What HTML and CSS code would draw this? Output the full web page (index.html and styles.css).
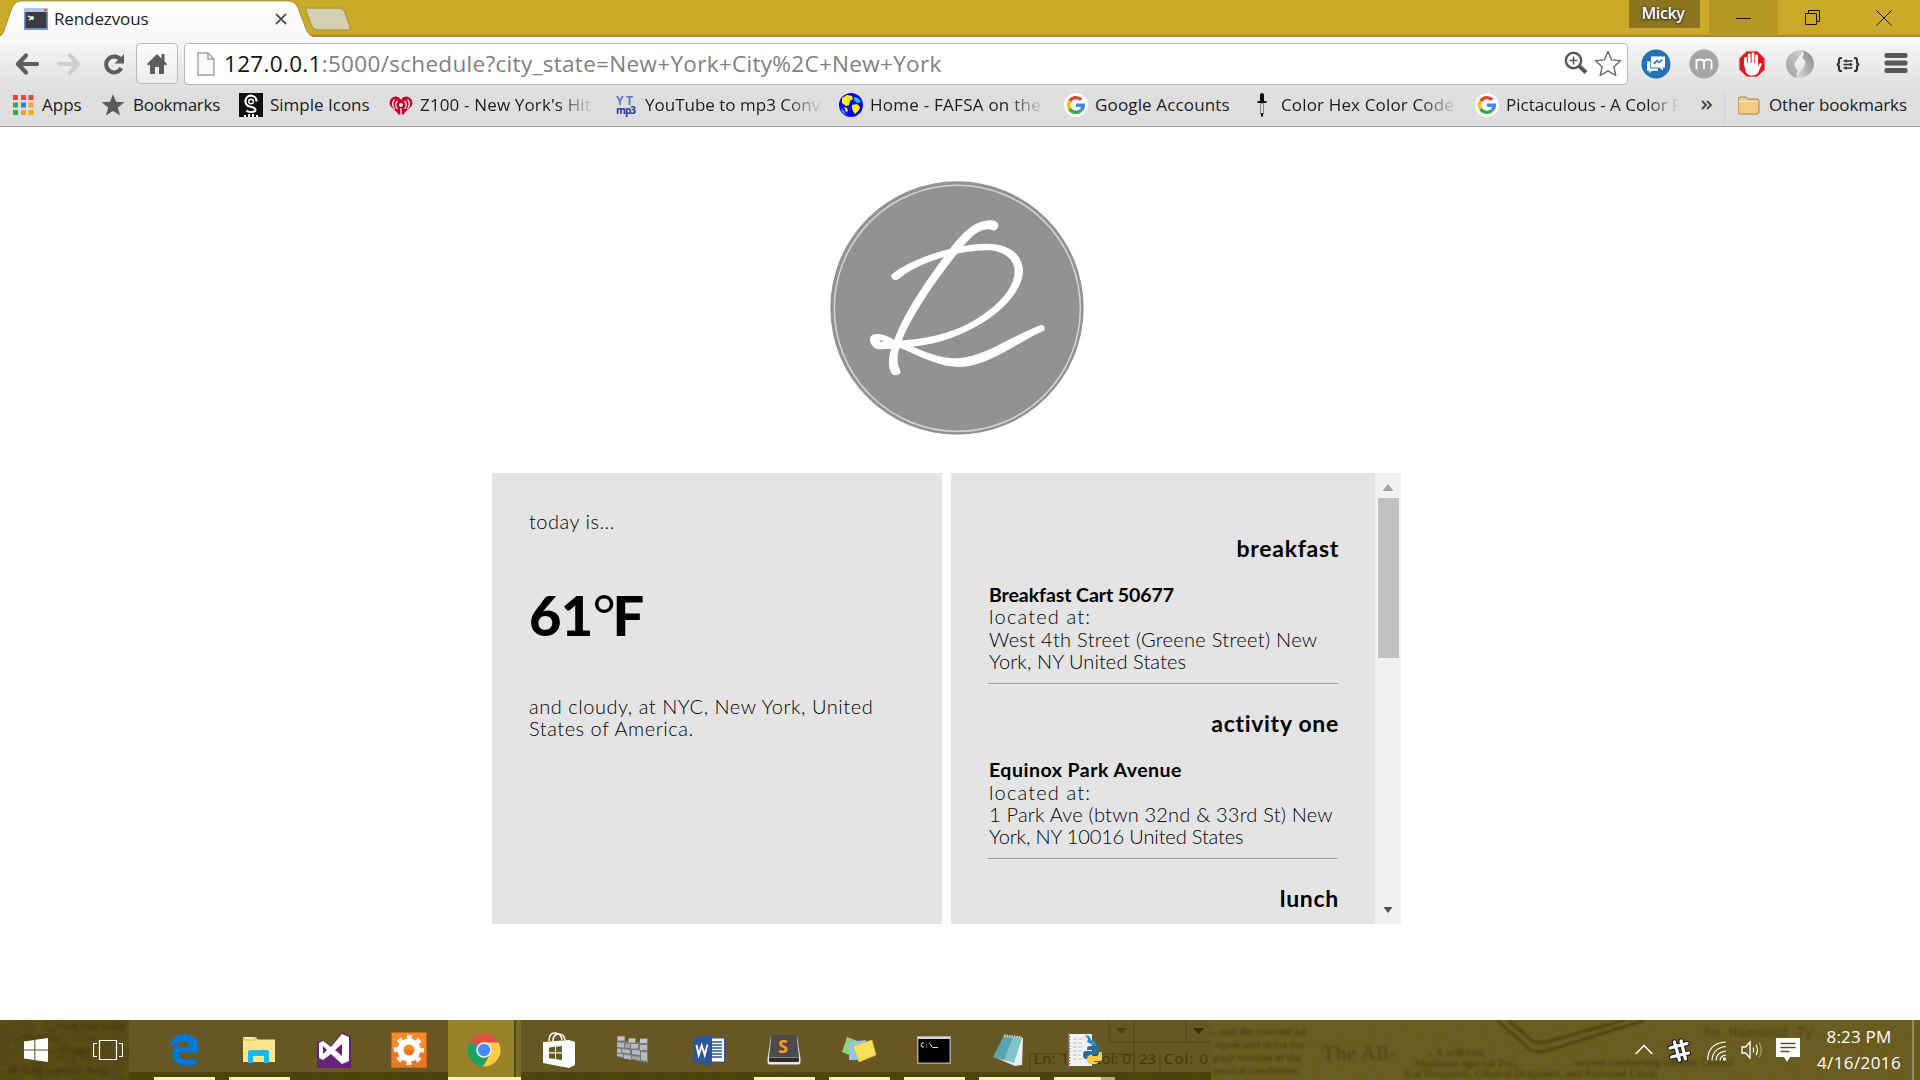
FILE: index.html
```html
<!DOCTYPE html>
<html lang="en">
<head>
<meta charset="utf-8">
<title>Rendezvous</title>
<link rel="stylesheet" href="styles.css">
</head>
<body>
<div class="screen">
  <header class="tabstrip">
    <div class="tab">
      <svg class="tab-shape" width="312" height="37" viewBox="0 0 312 37"><defs><linearGradient id="tg" x2="0" y2="1"><stop offset="0" stop-color="#fff"/><stop offset="1" stop-color="#f8f8f8"/></linearGradient></defs><path d="M0 36C4 35 4 30 6 25L12 8Q15 1 22 1H288Q295 1 298 8L306 29Q309 36 312 36V37H0Z" fill="url(#tg)"/><path d="M0 35C4 34 4 30 6 25L12 8Q15 1 22 1H288Q295 1 298 8L306 29Q309 36 312 36" fill="none" stroke="#8d7a2c" stroke-opacity=".7"/></svg>
      <svg class="favicon" width="24" height="22" viewBox="0 0 24 22"><rect width="24" height="22" fill="#6d96d8"/><rect width="24" height="4" fill="#a9c4ee"/><rect x="20" y="1" width="3" height="2" fill="#e8513a"/><rect x="1.500" y="4" width="21" height="16" fill="#3b3b3b"/><path d="M4 8l4 2-3 2M7 9h2v2H6" stroke="#eee" stroke-width="1.500" fill="none"/></svg>
      <span class="tab-title">Rendezvous</span>
      <svg class="tab-close" width="12" height="12" viewBox="0 0 12 12"><path d="M1 1l10 10M11 1L1 11" stroke="#555" stroke-width="1.800"/></svg>
    </div>
    <svg class="newtab" width="48" height="25" viewBox="0 0 48 25"><path d="M4 1H35Q39 1 41 5L46 20Q47 23 44 23H14Q10 23 8 20L2 4Q1 1 4 1Z" fill="#d3cfb3" stroke="#b39a3c" stroke-width="1.500"/></svg>
    <div class="user">Micky</div>
    <div class="win minimize"><svg width="16" height="16" viewBox="0 0 16 16"><path d="M0 8.500h15" stroke="#111"/></svg></div>
    <div class="win"><svg width="16" height="16" viewBox="0 0 16 16"><path d="M.5 3.500h11v11H.5zM3.500 3.500v-3h11v11h-3" stroke="#111" fill="none"/></svg></div>
    <div class="win"><svg width="16" height="16" viewBox="0 0 16 16"><path d="M.5.5l15 15M15.500.5l-15 15" stroke="#111"/></svg></div>
  </header>

  <div class="chrome">
    <nav class="toolbar">
      <svg class="back" width="24" height="22" viewBox="0 0 24 22"><path d="M22 11H4M11 2.500L3 11l8 8.500" stroke="#5d5d5d" stroke-width="4.200" fill="none" stroke-linecap="round" stroke-linejoin="round"/></svg>
      <svg class="forward" width="24" height="22" viewBox="0 0 24 22"><path d="M2 11H20M13 2.500L21 11l-8 8.500" stroke="#cfcfcf" stroke-width="4.200" fill="none" stroke-linecap="round" stroke-linejoin="round"/></svg>
      <svg class="reload" width="22" height="22" viewBox="0 0 22 22"><path d="M17.500 6.500A8 8 0 1 0 18.300 15" stroke="#5d5d5d" stroke-width="4" fill="none"/><path d="M21 1v9.500h-9.500z" fill="#5d5d5d"/></svg>
      <div class="home"><svg width="20" height="22" viewBox="0 0 20 22"><path d="M10 1L0 11l1.500 1.500L3 11.500V21h5v-7h4v7h5v-9.500l1.500 1L20 11l-2.500-2.500V1h-3v4.500z" fill="#5d5d5d"/></svg></div>
      <div class="omnibox">
        <svg class="doc" width="18" height="24" viewBox="0 0 18 24"><path d="M1 1h10l6 6v16H1z" fill="#fafafa" stroke="#a0a0a0" stroke-width="1.400"/><path d="M11 1v6h6" fill="none" stroke="#a0a0a0" stroke-width="1.400"/></svg>
        <div class="url"><span class="host">127.0.0.1</span>:5000/schedule?city_state=New+York+City%2C+New+York</div>
        <svg class="zoom" width="24" height="24" viewBox="0 0 24 24"><circle cx="9.500" cy="9.500" r="7.700" fill="none" stroke="#555" stroke-width="2.400"/><path d="M15 15l7 6.500" stroke="#555" stroke-width="4"/><path d="M5.500 9.500h8M9.500 5.500v8" stroke="#555" stroke-width="1.600"/></svg>
        <svg class="star" width="28" height="27" viewBox="0 0 28 27"><path d="M14 1.500l3.600 8.400 9 .8-6.800 6 2 8.800-7.800-4.700-7.800 4.700 2-8.800-6.800-6 9-.8z" fill="#fff" stroke="#6a6a6a" stroke-width="1.400" stroke-linejoin="round"/></svg>
      </div>
      <div class="exts">
        <svg width="30" height="30" viewBox="0 0 30 30"><circle cx="15" cy="15" r="14.500" fill="#2471b9"/><path d="M10 7.500h14v11h-2v3l-3.500-3H10z" fill="#fff"/><path d="M6 12.500h3.300v7h7.700v2.300h-6l-2.700 2.400v-2.400H6z" fill="#fff"/><path d="M13 15l3-3.500 2 2 3.500-3" stroke="#2471b9" stroke-width="1.600" fill="none"/></svg>
        <svg width="30" height="30" viewBox="0 0 30 30"><circle cx="15" cy="15" r="14.500" fill="#a5a5a5"/><path d="M7.500 20.500V10M7.500 14q0-3.500 3.800-3.500T15 14v6.500M15 14q0-3.500 3.800-3.500t3.700 3.500v6.500" stroke="#fff" stroke-width="1.900" fill="none"/></svg>
        <svg width="30" height="30" viewBox="0 0 30 30"><path d="M9.500 2h11L28 9.500v11L20.500 28h-11L2 20.500v-11z" fill="#e3171b" stroke="#e3dada"/><path d="M8.500 16V9.500M12.200 15V6M16 15V4.800M19.600 15V7" stroke="#fff" stroke-width="2.800" stroke-linecap="round"/><path d="M7.100 14h14v3.500l2-3.500q2-.5 1.500 1.500L21 24q-1.500 2.500-6 2.500-5 0-6.600-4.500Z" fill="#fff"/></svg>
        <svg width="30" height="30" viewBox="0 0 30 30"><defs><linearGradient id="jg" x1="0" y1="1" x2="1" y2="0"><stop offset="0" stop-color="#d8d8d8"/><stop offset="1" stop-color="#858585"/></linearGradient><linearGradient id="jh" x1="0" y1="1" x2="1" y2="0"><stop offset="0" stop-color="#9c9c9c"/><stop offset="1" stop-color="#d2d2d2"/></linearGradient></defs><path d="M18 1C9 .5 1 6 1 15c0 7 5 13 12 14-2-2-2-5 0-8-4-2-4-6-2-9 1.500-3 4-4 7-11Z" fill="url(#jh)"/><path d="M12 29C22 30 29 23 29 15 29 8 24 3 17 1c2 2 2 5 0 8 4 2 4 6 2 9-1.500 3-5 4-7 11Z" fill="url(#jg)"/></svg>
        <svg width="30" height="30" viewBox="0 0 30 30"><path d="M9 9H8q-2 0-2 2v2q0 2-2 2.500 2 .5 2 2.500v2q0 2 2 2h1M21 9h1q2 0 2 2v2q0 2 2 2.500-2 .5-2 2.500v2q0 2-2 2h-1" stroke="#333" stroke-width="2.200" fill="none"/><path d="M10.500 12h9M10.500 15.500h9M10.500 19h9" stroke="#333" stroke-width="1.700"/><path d="M13 10.500v3M17.500 14v3M13 17.500v3" stroke="#333" stroke-width="1.500"/></svg>
      </div>
      <svg class="menu" width="24" height="20" viewBox="0 0 24 20"><g fill="#585858"><rect x=".5" width="23" height="5" rx="2"/><rect x=".5" y="7.500" width="23" height="5" rx="2"/><rect x=".5" y="15" width="23" height="5" rx="2"/></g></svg>
    </nav>
    <nav class="bookmarks">
      <div class="bm"><svg class="bi" viewBox="0 0 24 24"><path d="M2 2h5v5H2zM10 2h5v5h-5zM17.500 2h5v5h-5z" fill="#f44336"/><path d="M2 9.500h5v5H2z" fill="#34a853"/><path d="M10 9.500h5v5h-5z" fill="#1e88e5"/><path d="M17.500 9.500h5v5h-5z" fill="#f9a825"/><path d="M2 17h5v5H2z" fill="#34a853"/><path d="M10 17h5v5h-5zM17.500 17h5v5h-5z" fill="#f9a60a"/></svg><span>Apps</span></div>
      <div class="bm tight"><svg class="bi" viewBox="0 0 24 24"><path d="M11 1l3 7.700 8.500.5-6.700 5.200 2.300 8L11 18l-7.100 4.400 2.300-8L-.5 9.200 8 8.700z" fill="#5a5a5a"/></svg><span>Bookmarks</span></div>
      <div class="bm"><svg class="bi" viewBox="0 0 24 24"><rect width="24" height="24" fill="#111"/><path d="M17.500 8.500a5.500 5.500 0 1 0-7 5q6 1 6 3.500 0 2-5 2-3 0-4-1.500" stroke="#fff" stroke-width="2.200" fill="none"/><circle cx="12" cy="8.500" r="2.300" fill="none" stroke="#fff" stroke-width="1.400"/><path d="M5 22h2v2H5zM9 21h2v3H9zM13 21h2v3h-2zM17 22h2v2h-2z" fill="#fff"/></svg><span>Simple Icons</span></div>
      <div class="bm wide"><svg class="bi" viewBox="0 0 24 24"><path d="M12 7C10 3 6.500 3 4.500 4 1 5.500-.5 9.500 1.500 13c2 3 6 5 8 8.500h5c2-3.500 6-5.500 8-8.500 2-3.500.5-7.500-3-9-2-1-5.500-1-7.500 3Z" fill="#c6002b"/><circle cx="12" cy="12" r="2" fill="#eee"/><path d="M8.500 8q-3.500 4 0 8M15.500 8q3.500 4 0 8M5.500 6.500q-4 5 .5 9.500M18.500 6.500q4 5-.5 9.500M12 15v7" stroke="#eee" stroke-width="1.300" fill="none"/></svg><span class="fade">Z100 - New York's Hit</span></div>
      <div class="bm"><svg class="bi" viewBox="0 0 24 24"><text x="2" y="12" class="yt1" textLength="17">YT</text><text x="2" y="21" class="yt2" textLength="20">mp3</text></svg><span class="fade">YouTube to mp3 Conv</span></div>
      <div class="bm wider"><svg class="bi" viewBox="0 0 24 24"><circle cx="12" cy="12" r="12" fill="#0808f0"/><path d="M3 5l5-3 5 1 1 3-3 2-1 4-3 1-4-3zM13 12l5-1 3 3-1 3-4 4-2-3-1-3zM5 14l3 1 1 3-2 1z" fill="#ffee12"/><path d="M15 4l4 1 3 4-4 1-3-3zM2 15l3 3 2 4-4-3z" fill="#35bed8"/></svg><span class="fade">Home - FAFSA on the</span></div>
      <div class="bm wide"><svg class="bi" viewBox="0 0 24 24"><circle cx="12" cy="12" r="12" fill="#fff"/><g fill="none" stroke-width="3.400"><path d="M5.700 8.200A7.300 7.300 0 0 1 17.200 6.800" stroke="#ea4335"/><path d="M5.700 15.800a7.300 7.300 0 0 1 0-7.600" stroke="#fbbc05"/><path d="M16.900 17.400A7.300 7.300 0 0 1 5.700 15.800" stroke="#34a853"/><path d="M12 12.300h7.300q0 3.500-2.400 5.100" stroke="#4285f4"/></g></svg><span>Google Accounts</span></div>
      <div class="bm wide"><svg class="bi" viewBox="0 0 24 24"><path d="M10 2q0-2 2-2t2 2v6h2.500v2H7.500V8H10z" fill="#111"/><path d="M10.500 10.500v9l1.500 3 1.500-3v-9z" fill="#ddd" stroke="#888"/><path d="M10.500 20h3l-1 4h-1z" fill="#111"/></svg><span class="fade">Color Hex Color Code</span></div>
      <div class="bm"><svg class="bi" viewBox="0 0 24 24"><circle cx="12" cy="12" r="12" fill="#fff"/><g fill="none" stroke-width="3.400"><path d="M5.700 8.200A7.300 7.300 0 0 1 17.200 6.800" stroke="#ea4335"/><path d="M5.700 15.800a7.300 7.300 0 0 1 0-7.600" stroke="#fbbc05"/><path d="M16.900 17.400A7.300 7.300 0 0 1 5.700 15.800" stroke="#34a853"/><path d="M12 12.300h7.300q0 3.500-2.400 5.100" stroke="#4285f4"/></g></svg><span class="fade long">Pictaculous - A Color P</span></div>
      <div class="more"><svg width="12" height="10" viewBox="0 0 12 10"><path d="M1 1l4 4-4 4M6 1l4 4-4 4" stroke="#4a4a4a" stroke-width="2" fill="none"/></svg></div>
      <div class="bm snug"><svg class="bi" viewBox="0 0 24 24"><path d="M0 6l1.500-2H8l1.500 2H19q2 0 2 2v11q0 2-2 2H2q-2 0-2-2z" fill="#f4cb86" stroke="#a98143"/><path d="M1 8.500h19" stroke="#fff0cb"/></svg><span>Other bookmarks</span></div>
    </nav>
  </div>

  <main class="page">
    <svg class="logo" width="254" height="256" viewBox="31 29 762 768">
      <circle cx="412" cy="413" r="380" fill="#929292"/>
      <circle cx="413" cy="414" r="369" fill="none" stroke="#d4d4d4" stroke-width="4.500"/>
      <g fill="#fff">
        <path d="M536 166C534 180 523 184 510 177C482 172 452 200 430 228C350 325 262 455 240 530C230 560 232 585 243 602C244 614 224 620 215 608C203 585 207 555 219 522C250 430 320 330 384 245C425 190 465 148 515 150C529 151 537 158 536 166Z"/>
        <path d="M217 312C265 270 400 221 500 220C570 220 609 252 610 303C606 405 430 522 262 530C230 535 200 536 178 537C158 535 148 515 152 500C160 485 195 489 225 510C300 512 390 490 450 458C535 410 583 355 585 305C586 265 550 240 500 240C410 240 290 280 240 324C228 335 208 325 217 312ZM178 512Q183 517 193 512Q184 508 178 512Z"/>
        <path d="M225 508C290 530 340 563 412 564C490 562 570 500 664 464C674 462 680 475 671 482C600 512 510 585 428 590C350 592 290 550 228 528Z"/>
      </g>
    </svg>
    <div class="cards">
      <section class="card weather">
        <p><span class="today">today is...</span></p>
        <h1>61<span class="degree">°</span>F</h1>
        <p class="summary">and cloudy, at NYC, New York, United<br>States of America.</p>
      </section>
      <section class="card plan">
        <div class="list">
          <h2>breakfast</h2>
          <p><b>Breakfast Cart 50677</b><br><span class="located">located at:</span><br><span class="street">West 4th Street (Greene Street) New</span><br><span class="city">York, NY United States</span></p>
          <hr>
          <h2>activity one</h2>
          <p><b class="gym">Equinox Park Avenue</b><br><span class="located">located at:</span><br><span class="avenue">1 Park Ave (btwn 32nd &amp; 33rd St) New</span><br><span class="zip">York, NY 10016 United States</span></p>
          <hr>
          <h2>lunch</h2>
        </div>
        <div class="scrollbar">
          <svg width="12" height="7" viewBox="0 0 12 7"><path d="M6 0l5.500 7H.5z" fill="#a3a3a3"/></svg>
          <div class="thumb"></div>
          <svg class="down" width="10" height="6" viewBox="0 0 10 6"><path d="M5 6L.5 0h9z" fill="#505050"/></svg>
        </div>
      </section>
    </div>
  </main>

  <footer class="taskbar">
    <svg class="wall" width="1920" height="60" viewBox="0 0 1920 60">
      <defs>
        <filter id="grain" x="0" y="0" width="100%" height="100%"><feTurbulence type="fractalNoise" baseFrequency=".09 .14" numOctaves="3" seed="4"/><feColorMatrix values="0 0 0 0 .15  0 0 0 0 .11  0 0 0 0 0  .9 0 0 0 -.32"/></filter>
        <filter id="soft"><feGaussianBlur stdDeviation=".9"/></filter>
      </defs>
      <rect width="1920" height="60" fill="#6a5c26"/>
      <rect width="1211" height="60" fill="#54471a"/>
      <rect width="1920" height="60" filter="url(#grain)"/>
      <g class="print" filter="url(#soft)">
        <text x="14" y="22">.. Mohen.</text><text x="64" y="10">sol Mei MDS</text><text x="60" y="34">Clotpe</text><text x="6" y="54">all dohg popular Surg</text>
        <text x="1213" y="15">, and the current ed</text><text x="1216" y="28">upon and drive for</text><text x="1213" y="41">page version of the</text><text x="1213" y="54">several conditions.</text>
        <text x="1322" y="40" class="big">The All-</text><text x="1430" y="36">. X will con.</text><text x="1415" y="47">Medicine Special Tre..</text><text x="1405" y="57">ical Diagnosis, Clinical Diagnosis, and Personal Clinic</text>
        <text x="1575" y="46">urrent conducting various Clinics</text><text x="1704" y="17" class="machine">he Hammond Ty</text>
        <path d="M1497 0L1525 25Q1533 35 1550 30L1645 0M1508 0L1530 19Q1537 25 1550 21L1625 0" fill="none" stroke="#3e3203" stroke-width="2" opacity=".75"/>
      </g>
      <rect x="129" width="1082" height="52" fill="#665724"/>
      <rect x="129" y="52" width="1082" height="8" fill="#4b3d0b" fill-opacity=".55"/>
      <g stroke="#54460f" fill="none"><path d="M1030 52V34h104v18M1160 34v18M1134 1v51M1109 22V1M1211 22h-102M1186 1v21"/></g>
      <path d="M1116 8h11l-5.500 6z" fill="#4e400c"/><path d="M1193 8h11l-5.500 6z" fill="#3a2d00"/>
      <g class="ghost"><text x="1034" y="44" textLength="35">Ln: 1</text><text x="1092" y="44" textLength="39">Col: 0</text><text x="1139" y="44">23</text><text x="1164" y="44" textLength="44">Col: 0</text></g>
    </svg>
    <div class="tasks">
      <div class="task start"><svg width="24" height="24" viewBox="0 0 24 24"><path d="M0 3.500L10.300 2v9.500H0zM11.300 1.800L24 0v11.500H11.300zM0 12.500h10.300V22L0 20.600zM11.300 12.500H24V24l-12.700-1.800z" fill="#fff"/></svg></div>
      <div class="task view"><svg width="30" height="20" viewBox="0 0 30 20"><path d="M6.500.5h17v19h-17zM4 3.500H.5v13H4M26 3.500h3.500v13H26" fill="none" stroke="#fff" stroke-width="1.200"/></svg></div>
      <div class="task run"><svg width="32" height="34" viewBox="0 0 32 34"><path d="M1 15C3 6 9 1 16 1c9 0 14.500 6 14.500 13v5.500h-20C11 24 15 27 20 27q5 0 8.500-2.300v6.600Q24 33 19 33C10 33 5 28 4.500 21.500 4 16 8 11 12 9.500q-1.500 2-1.600 5h11.400C21.800 11 20 8.500 15.500 8.500 9.500 8.500 4 11.500 1 15Z" fill="#0078d7"/></svg></div>
      <div class="task run"><svg width="34" height="30" viewBox="0 0 34 30"><path d="M1 2h13l2 3h16v22H1z" fill="#f6cf5b"/><path d="M1 6h12l2-1.500h18V27H1z" fill="#fde48f"/><path d="M3 3h8" stroke="#fff" stroke-width="1.500"/><path d="M6 28V17q0-2 2-2h17q2 0 2 2v11h-5v-7H11v7z" fill="#16b8ef"/></svg></div>
      <div class="task"><svg width="34" height="36" viewBox="0 0 34 36"><path d="M25 0l9 4v32H0V9h6l8 5z" fill="#68217a"/><path fill-rule="evenodd" d="M25 2l7 3v24l-7 3-11-10-8 6-4-2V11l4-2 8 6zM25 12l-7 6 7 6zM6 14v8l4-4z" fill="#fff"/></svg></div>
      <div class="task"><svg width="36" height="36" viewBox="0 0 36 36"><rect x=".5" y=".5" width="35" height="35" rx="1" fill="#f58a28" stroke="#c5601c"/><path d="M0 18h36v18H0z" fill="#e36c22" opacity=".55"/><circle cx="18" cy="18" r="8.500" fill="none" stroke="#fff" stroke-width="6"/><circle cx="18" cy="18" r="12.800" fill="none" stroke="#f2f2f2" stroke-width="4.500" stroke-dasharray="5 5.053" stroke-dashoffset="2.500"/></svg></div>
      <div class="task active"><svg width="34" height="34" viewBox="0 0 34 34"><circle cx="17" cy="17" r="16.500" fill="#dd5144"/><path d="M17 17L2.700 8.800A16.500 16.500 0 0 0 16 33.500l7-12.500z" fill="#1ca362"/><path d="M17 9.500h14.700A16.500 16.500 0 0 1 16 33.500l7.500-12.800z" fill="#ffcd42"/><circle cx="17" cy="17" r="7.800" fill="#f1f1f1"/><circle cx="17" cy="17" r="6.200" fill="#4c8bf5"/></svg></div>
      <div class="task"><svg width="34" height="36" viewBox="0 0 34 36"><path d="M1 10l26-2 6 2v23l-6 3L1 31z" fill="#fff"/><path d="M7 9q0-8 6-8t7 7M11 9q0-7 6-7 5 0 6 6" fill="none" stroke="#fff" stroke-width="1.500"/><path d="M7 15.500l6-.7v5.500H7zM14 14.700l6-.7v6.300h-6zM7 21.500h6V27l-6-.8zM14 21.500h6V28l-6-.8z" fill="#665724"/></svg></div>
      <div class="task wallicon"><svg width="34" height="30" viewBox="0 0 34 30"><path d="M1 1h8v5h4V3h7v4h4V3h8v25L1 22z" fill="#74797e"/><path d="M1.500 1.500h7v4h-7zM12.500 3.500h6.500v4h-6.500zM24 4h7v4h-7z" fill="#c3c8ce"/><path d="M1 7.500l7 .5v4.500l-7-.5zM15 9h7v4.500h-7zM24 10h7v5h-7zM6 14l8 1v3.500l-8-1zM1 13.500l4 .5v4l-4-.5zM16 15l8 .5V20l-8-1zM8 19.500l7 1v4l-7-1zM25 17l6 .5V26l-6-1zM1 18.500l6 1V22l-6-1z" fill="#b4bac0"/><path d="M9 8.500h5v4.500l-5-.5zM16 21l8 1v3.500l-8-1.500z" fill="#a3a688"/></svg></div>
      <div class="task"><svg width="32" height="32" viewBox="0 0 32 32"><rect x="15" y="4" width="16.500" height="24" fill="#fff" stroke="#2b579a"/><path d="M19 8h10M19 11h10M19 14h10M19 17h10M19 20h10M19 23h10" stroke="#2b579a" stroke-width="1.300"/><path d="M0 4L19 0v32L0 28z" fill="#2b579a"/><path d="M3.500 11l2.200 10 3-9.500L11.700 21 14.500 10.500" fill="none" stroke="#fff" stroke-width="2"/></svg></div>
      <div class="task run"><svg width="34" height="30" viewBox="0 0 34 30"><path d="M4 1h26l3.500 23v3q0 2.500-2.500 2.500H3Q.5 29.500.5 27v-3z" fill="#e8e8e8"/><path d="M4.500 0h25L32 22H2z" fill="#4a4a4a"/><path d="M2 22.500h30v3q0 1.500-1.500 1.500h-27Q2 27 2 25.500z" fill="#2c2c2c"/><text x="11" y="18" class="sub">S</text></svg></div>
      <div class="task run"><svg width="36" height="32" viewBox="0 0 36 32"><path d="M6 3l16 6-6 15L1 18z" fill="#8fd184"/><path d="M8 8l17-2v20H8z" fill="#8cc6f3"/><path d="M12 12l19-6 4 15-17 7z" fill="#fbe05e" stroke="#d9b83a" stroke-width=".8"/></svg></div>
      <div class="task run"><svg width="34" height="28" viewBox="0 0 34 28"><rect x=".7" y=".7" width="32.500" height="26.500" fill="#000" stroke="#aaa" stroke-width="1.400"/><path d="M1 2h32" stroke="#d5d9df" stroke-width="2"/><path d="M7 7q-3-.5-3 2t3 2M9.500 8v.8M9.500 10.500v.8M12 6.500l3.500 5M16 11.500h5" stroke="#e8e8e8" fill="none"/></svg></div>
      <div class="task run"><svg width="34" height="32" viewBox="0 0 34 32"><path d="M12 2l19 2-1 27-7 1L2 23z" fill="#eaf0f2"/><path d="M12 2l18 2-8 25-21-6z" fill="#7fc3ce"/><path d="M12 2l9 1-9 23-11-3z" fill="#2f7f88" opacity=".45"/><path d="M12 1.500l18 2" stroke="#ccd" stroke-width="2.500" stroke-dasharray="1.500 1"/></svg></div>
      <div class="task run last"><svg width="36" height="36" viewBox="0 0 36 36"><path d="M3 2h23v32H3z" fill="#f3f3f3"/><path d="M3 1v34" stroke="#777" stroke-width="2.500" stroke-dasharray="1.500 1.500"/><path d="M7 7h12M7 11h9M7 15h11M7 19h9M7 23h8M7 27h10" stroke="#bbb" stroke-dasharray="4 1.500"/><path d="M19 3l4 1 3 5 2-1 3 6 3 2-6 2-3-6-4-2 1-3z" fill="#2d88d2"/><path d="M24 14h6q3 0 3 3v3q0 3-3 3h-5q-3 0-3 4h-2q-3 0-3-4 0-4 3-4h7v-1h-6v-2q0-2 3-2z" fill="#306998"/><path d="M28 32h-3q-4 0-4-3v-2q0-3 3-3h6q3 0 3-4h2q2 1 2 4 0 5-4 5h-5v1h4q0 2-4 2z" fill="#ffce3e"/></svg></div>
    </div>
    <div class="tray">
      <svg class="t1" width="18" height="11" viewBox="0 0 18 11"><path d="M.7 10L9 1.500 17.300 10" fill="none" stroke="#fff" stroke-width="1.500"/></svg>
      <svg class="t2" width="24" height="26" viewBox="0 0 24 26"><g stroke-linecap="round" fill="none"><path d="M7.500 4l5 18M14 3l4.500 18M3 10l17-4.500M4.500 19L21.500 15" stroke="#1c1c1c" stroke-width="5.500"/><path d="M7.500 4l5 18M14 3l4.500 18M3 10l17-4.500M4.500 19L21.500 15" stroke="#fff" stroke-width="3.200"/></g></svg>
      <svg class="t3" width="20" height="20" viewBox="0 0 20 20"><g fill="none" stroke="#fff" stroke-width="1.200"><path d="M.7 19Q1 2 19 1M5 19.500Q5.500 7 19 5.500M9 19.500Q9.500 11 19 10M13 19.500q.5-5 6-5.500"/></g><circle cx="17.500" cy="18" r="1.700" fill="#fff"/></svg>
      <svg class="t4" width="22" height="20" viewBox="0 0 22 20"><path d="M1 7h3.500L9 2v16l-4.500-5H1z" fill="none" stroke="#fff" stroke-width="1.300"/><path d="M12 7.500q1.500 2.500 0 5M15 5q3 5 0 10" fill="none" stroke="#fff" stroke-width="1.200"/><path d="M18 2.500q4.500 7.500 0 15" fill="none" stroke="#a89f7d" stroke-width="1.200"/></svg>
      <svg class="t5" width="24" height="24" viewBox="0 0 24 24"><path d="M0 0h24v19H14l-3 5-3-5H0z" fill="#fff"/><path d="M4.500 5.500h15M4.500 9.500h15M4.500 13.500h9" stroke="#5d5020" stroke-width="1.300"/></svg>
      <div class="clock"><span class="time">8:23 PM</span><br><span class="date">4/16/2016</span></div>
      <div class="peek"></div>
    </div>
  </footer>
</div>
</body>
</html>
```
FILE: styles.css
```css
* { box-sizing: border-box; }
body { margin: 0; background: #fff; overflow: hidden; font-family: "Open Sans", "Noto Sans", sans-serif; }
svg { display: block; flex: none; }
.screen { width: 1920px; height: 1080px; display: flex; flex-direction: column; }

.tabstrip { height: 37px; display: flex; background: linear-gradient(#caaa28 34px, #b3972a 35px, #96802a 37px); }
.tab { position: relative; width: 304px; display: flex; padding-left: 24px; }
.tab-shape { position: absolute; left: 0; top: 0; }
.favicon { position: relative; margin-top: 8px; }
.tab-title { position: relative; margin-left: 6px; font-size: 17px; letter-spacing: -.12px; line-height: 37px; color: #222; white-space: nowrap; align-self: flex-start; }
.tab-close { position: absolute; left: 275px; top: 13px; }
.newtab { margin-top: 7px; }
.user { margin-left: auto; width: 71px; height: 28px; background: #8c761d; color: #fff; font-size: 16px; letter-spacing: -.38px; font-weight: 600; line-height: 26px; padding-right: 3px; text-align: center; text-shadow: 0 0 3px #222, 0 1px 2px #333; margin-right: 9px; }
.win { width: 69px; height: 36px; display: flex; align-items: center; justify-content: center; }
.win.minimize { background: #b69925; }
.win:last-child { width: 73px; }

.chrome { height: 90px; background: linear-gradient(#f8f8f8, #e3e3e3 45px, #dedede 60px, #dedede); border-bottom: 1px solid #a5a5a5; }
.toolbar { height: 48px; display: flex; align-items: flex-start; padding-left: 15px; }
.back, .forward { margin-top: 16px; }
.forward { margin-left: 18px; }
.reload { margin: 16px 0 0 22px; }
.home { margin: 6px 0 0 11px; width: 42px; height: 41px; border: 1px solid #b9b9b9; border-radius: 4px; background: linear-gradient(#fcfcfc, #ececec); display: flex; align-items: center; justify-content: center; }
.omnibox { margin: 6px 0 0 6px; width: 1444px; height: 42px; border: 1px solid #b5b5b5; border-radius: 4px; background: #fff; display: flex; align-items: center; padding-left: 12px; }
.url { margin: -2px 0 0 9px; font-size: 22.500px; letter-spacing: .31px; color: #808080; white-space: nowrap; }
.host { color: #111; }
.zoom { margin: -3px 6px 0 auto; }
.star { margin: -1px 5px 0 0; }
.exts { display: flex; gap: 18px; margin: 12px 0 0 13px; }
.menu { margin: 16px 0 0 21px; }
.bookmarks { height: 41px; display: grid; grid-template-columns: 91px 137px 150px 225px 225px 225px 186px 225px 226px 37px 1fr; padding: 7px 0 0 11px; }
.bm { display: flex; font-size: 17px; line-height: 26px; color: #1c1c1c; white-space: nowrap; align-items: flex-start; }
.bm.wide { letter-spacing: .15px; }
.bm.wider { letter-spacing: .25px; }
.bm.snug { letter-spacing: -.11px; }
.bm.tight { letter-spacing: -.28px; }
.bi { width: 24px; height: 24px; margin: 1px 7px 0 0; }
.fade { -webkit-mask-image: linear-gradient(90deg, #000 80%, rgba(0,0,0,.1)); mask-image: linear-gradient(90deg, #000 80%, rgba(0,0,0,.1)); }
.fade.long { -webkit-mask-image: linear-gradient(90deg, #000 80%, rgba(0,0,0,.2) 95%, transparent 98%); mask-image: linear-gradient(90deg, #000 80%, rgba(0,0,0,.2) 95%, transparent 98%); }
.yt1 { font: 700 12px/1 "Open Sans", sans-serif; fill: #5b74d4; }
.yt2 { font: 700 10px/1 "Open Sans", sans-serif; fill: #26388e; }
.more { border-right: 1px solid #c7d3e2; width: 24px; height: 32px; padding-top: 8px; }

.page { flex: 1; padding: 53px 0 0 492px; }
.logo { margin-left: 338px; }
.cards { display: flex; gap: 9px; margin-top: 37px; }
.card { width: 450px; height: 451px; background: #e4e4e4; overflow: hidden; font-family: Lato, "Open Sans", sans-serif; font-size: 20px; line-height: 22.400px; color: #000; white-space: nowrap; }
.card p { margin: 0; font-weight: 300; }
.card b { font-size: 19.500px; font-weight: 700; letter-spacing: -.07px; line-height: 20px; }
.card .gym { letter-spacing: .5px; }
.weather { padding: 37px; }
.today { letter-spacing: .5px; }
.summary { letter-spacing: .54px; }
.located { letter-spacing: 1.150px; }
.street { letter-spacing: .3px; }
.city { letter-spacing: .1px; }
.avenue { letter-spacing: .21px; }
.zip { letter-spacing: -.14px; }
.weather h1 { margin: 53px 0 49.500px; font-size: 56px; line-height: 60px; font-weight: 900; letter-spacing: -.8px; }
.degree { font-weight: 400; letter-spacing: -3px; }
.plan { display: flex; justify-content: space-between; }
.list { width: 388px; padding: 37px 0 0 38px; }
.list h2 { margin: 24.500px 0 21.500px; font-size: 23px; line-height: 27px; letter-spacing: .7px; text-align: right; }
.list hr { margin: 10.500px 1px 0 -1px; height: 2px; border: 0; border-top: 1px solid #9a9a9a; border-bottom: 1px solid #eee; }
.scrollbar { width: 26px; background: #f1f1f1; display: flex; flex-direction: column; align-items: center; padding: 11px 0; }
.thumb { width: 21px; height: 160px; margin-top: 7px; background: #c1c1c1; }
.down { margin-top: auto; }

.taskbar { position: relative; height: 60px; display: flex; justify-content: space-between; overflow: hidden; }
.wall { position: absolute; left: 0; top: 0; }
.print text { font: 700 11px "Liberation Serif", serif; fill: #352a00; fill-opacity: .5; }
.print .big { font-size: 22px; font-weight: 400; }
.print .machine { font: 14px "Liberation Mono", monospace; }
.ghost text { font: 15px "Open Sans", sans-serif; fill: #493800; }
.sub { font: 700 18px "Open Sans", sans-serif; fill: #ff9a1f; }
.tasks { position: relative; display: flex; }
.task { width: 75px; height: 60px; display: flex; align-items: center; justify-content: center; position: relative; }
.start { width: 72px; }
.view { width: 74.500px; padding-right: 2px; }
.wallicon { padding-right: 3px; }
.run::after { content: ""; position: absolute; left: 7px; bottom: 0; width: 61px; height: 3px; background: #fff0b8; }
.last::after { background: linear-gradient(90deg, #fff0b8 47px, #b8ac80 47px); }
.active { background: linear-gradient(90deg, #978228 66px, #544613 66px 68px, #7d6a20 68px); width: 73px; margin-left: 1px; }
.active::after { content: ""; position: absolute; left: 0; bottom: 0; width: 73px; height: 3px; background: #fff0b8; }
.active + .task { margin-left: 1px; }
.tray { position: relative; width: 285px; display: flex; align-items: flex-start; }
.t1 { margin-top: 24px; }
.t2 { margin: 18px 0 0 14px; }
.t3 { margin: 21px 0 0 16px; }
.t4 { margin: 20px 0 0 14px; }
.t5 { margin: 18px 0 0 13px; }
.clock { margin: 4px 0 0 16px; width: 86px; font-size: 17px; line-height: 26px; text-align: center; color: #fff; white-space: nowrap; }
.time { letter-spacing: .2px; }
.date { letter-spacing: .39px; }
.peek { margin-left: 10px; width: 2px; height: 60px; background: #948a67; }
```
